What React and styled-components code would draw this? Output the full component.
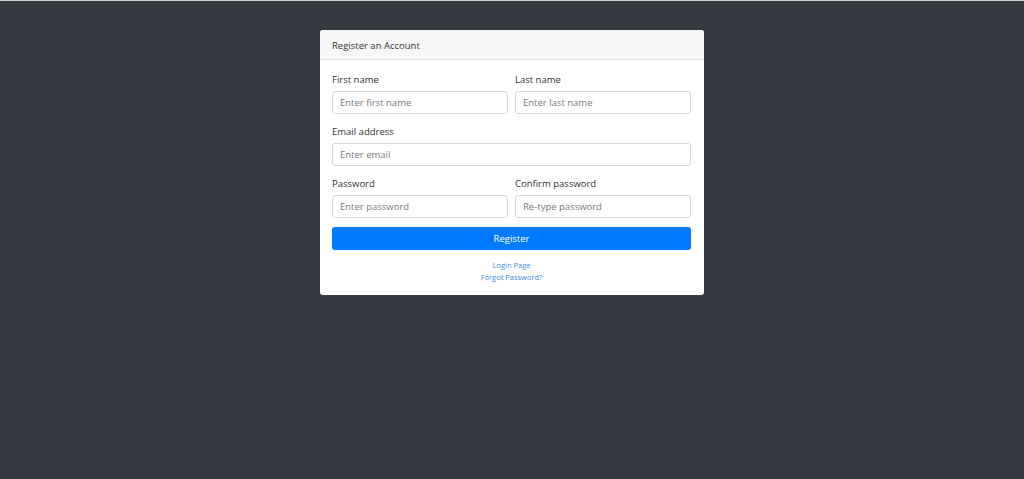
import styled, { createGlobalStyle } from "styled-components";

const Global = createGlobalStyle`
  html, body { margin: 0; padding: 0; }
  body {
    background: #343a40;
    font-family: "Open Sans", "Noto Sans", sans-serif;
    color: #212529;
  }
`;

const Page = styled.div`
  min-height: 479px;
  box-sizing: border-box;
  border-top: 1px solid #c9cccf;
  display: flex;
  justify-content: center;
  align-items: flex-start;
  padding-top: 29px;
`;

const Card = styled.div`
  width: 384px;
  background: #fff;
  border-radius: 3px;
  overflow: hidden;
`;

const CardHeader = styled.div`
  height: 30px;
  box-sizing: border-box;
  padding: 2px 12px 0;
  display: flex;
  align-items: center;
  background: #f7f7f7;
  border-bottom: 1px solid #dfdfdf;
  font-size: 9.5px;
  color: #333;
`;

const CardBody = styled.form`
  padding: 12px 13px 10px 12px;
  display: flex;
  flex-direction: column;
`;

const Row = styled.div`
  display: grid;
  grid-template-columns: ${p => (p.cols === 2 ? "1fr 1fr" : "1fr")};
  column-gap: 7px;
  margin-bottom: ${p => (p.last ? "9px" : "10px")};
`;

const Field = styled.div`
  display: flex;
  flex-direction: column;
`;

const Label = styled.label`
  font-size: 9.5px;
  color: #333;
  line-height: 13px;
  margin-bottom: 5px;
  padding-top: 1px;
`;

const Input = styled.input`
  height: 23px;
  box-sizing: border-box;
  border: 1px solid #d6d9dc;
  border-radius: 3px;
  padding: 0 7px;
  font-family: inherit;
  font-size: 9.5px;
  color: #495057;
  outline: none;
  &::placeholder { color: #767d84; }
`;

const Button = styled.button`
  height: 23px;
  border: none;
  border-radius: 3px;
  background: #007bff;
  color: #fff;
  font-family: inherit;
  font-size: 9.5px;
  cursor: pointer;
`;

const Links = styled.div`
  display: flex;
  flex-direction: column;
  align-items: center;
  margin-top: 9px;
  margin-bottom: 2px;
`;

const SmallLink = styled.a`
  color: #3a8eea;
  font-size: 7.5px;
  line-height: 12px;
  text-decoration: none;
`;

function App() {
  return (
    <>
      <Global />
      <Page>
        <Card>
          <CardHeader>Register an Account</CardHeader>
          <CardBody onSubmit={e => e.preventDefault()}>
            <Row cols={2}>
              <Field>
                <Label>First name</Label>
                <Input placeholder="Enter first name" />
              </Field>
              <Field>
                <Label>Last name</Label>
                <Input placeholder="Enter last name" />
              </Field>
            </Row>
            <Row cols={1}>
              <Field>
                <Label>Email address</Label>
                <Input type="email" placeholder="Enter email" />
              </Field>
            </Row>
            <Row cols={2} last>
              <Field>
                <Label>Password</Label>
                <Input type="password" placeholder="Enter password" />
              </Field>
              <Field>
                <Label>Confirm password</Label>
                <Input type="password" placeholder="Re-type password" />
              </Field>
            </Row>
            <Button type="submit">Register</Button>
            <Links>
              <SmallLink href="#">Login Page</SmallLink>
              <SmallLink href="#">Forgot Password?</SmallLink>
            </Links>
          </CardBody>
        </Card>
      </Page>
    </>
  );
}

export default App;
